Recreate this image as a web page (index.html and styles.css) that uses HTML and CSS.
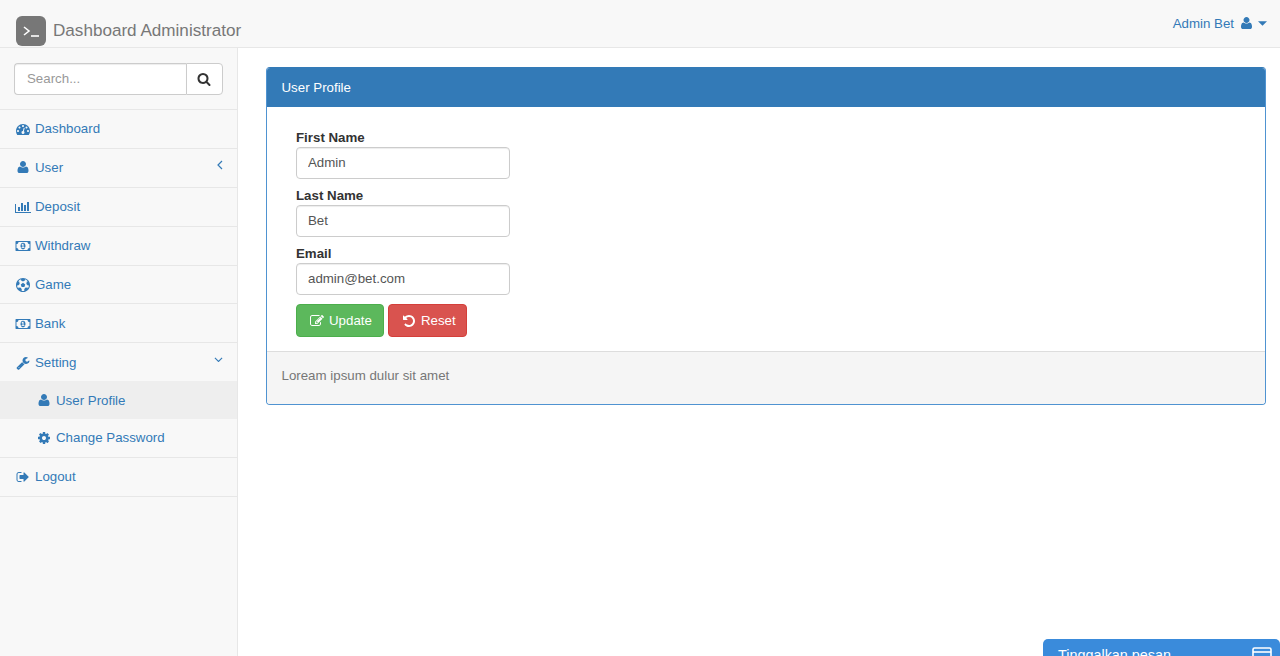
FILE: index.html
```html
<!DOCTYPE html>
<html lang="en">
<head>
<meta charset="utf-8">
<title>Dashboard Administrator</title>
<link rel="stylesheet" href="styles.css">
</head>
<body>
<header class="navbar">
  <a class="brand" href="#">
    <svg class="logo" viewBox="0 0 30 30"><rect width="30" height="30" rx="6" fill="#777"/><path d="M8 11l5 4-5 4" fill="none" stroke="#fff" stroke-width="1.6"/><path d="M15 20h8" stroke="#fff" stroke-width="1.6"/></svg>
    <span>Dashboard Administrator</span>
  </a>
  <a class="account" href="#">
    <span>Admin Bet</span>
    <svg class="account-user" viewBox="0 0 1408 1792"><path d="M1408 1277q0 120-73 189.500t-194 69.500h-874q-121 0-194-69.500t-73-189.500q0-53 3.500-103.500t14-109 26.500-108.500 43-97.500 62-81 85.500-53.500 111.500-20q9 0 42 21.500t74.500 48 108 48 133.500 21.500 133.500-21.500 108-48 74.500-48 42-21.500q61 0 111.500 20t85.500 53.500 62 81 43 97.500 26.500 108.500 14 109 3.500 103.500zm-320-893q0 159-112.500 271.500t-271.500 112.500-271.500-112.500-112.500-271.500 112.500-271.500 271.500-112.500 271.500 112.500 112.500 271.500z"/></svg>
    <svg class="caret" viewBox="0 0 10 5"><path d="M0 0h10L5 5z"/></svg>
  </a>
</header>
<div class="shell">
  <nav class="sidebar">
    <div class="search">
      <input class="search-input" type="text" placeholder="Search...">
      <button class="search-btn" type="button" aria-label="Search">
        <svg viewBox="0 0 1792 1792"><path d="M1216 832q0-185-131.500-316.500t-316.500-131.500-316.500 131.500-131.500 316.500 131.500 316.500 316.500 131.500 316.500-131.500 131.500-316.500zm512 832q0 52-38 90t-90 38q-54 0-90-38l-343-342q-179 124-399 124-143 0-273.500-55.500t-225-150-150-225-55.500-273.500 55.500-273.500 150-225 225-150 273.500-55.500 273.500 55.500 225 150 150 225 55.500 273.500q0 220-124 399l343 343q37 37 37 90z"/></svg>
      </button>
    </div>
    <ul class="menu">
      <li><a href="#"><svg class="ico" viewBox="0 0 1792 1792"><path d="M384 1152q0-53-37.500-90.500t-90.500-37.500-90.500 37.500-37.500 90.500 37.500 90.500 90.500 37.500 90.500-37.500 37.500-90.500zm192-448q0-53-37.500-90.500t-90.500-37.500-90.500 37.500-37.500 90.500 37.500 90.500 90.500 37.500 90.500-37.500 37.500-90.500zm428 481l101-382q6-26-7.500-48.500t-38.500-29.500-48 6.500-30 39.500l-101 382q-60 5-107 43.500t-63 98.500q-20 77 20 146t117 89 146-20 89-117q16-60-6-117t-72-91zm660-33q0-53-37.500-90.500t-90.500-37.500-90.500 37.500-37.500 90.500 37.500 90.500 90.500 37.500 90.500-37.500 37.500-90.500zm-640-640q0-53-37.500-90.500t-90.500-37.500-90.500 37.500-37.500 90.500 37.500 90.500 90.500 37.500 90.500-37.500 37.500-90.500zm448 192q0-53-37.500-90.500t-90.500-37.500-90.500 37.500-37.500 90.500 37.500 90.500 90.500 37.500 90.500-37.500 37.500-90.500zm320 448q0 261-141 483-19 29-54 29h-1402q-35 0-54-29-141-221-141-483 0-182 71-348t191-286 286-191 348-71 348 71 286 191 191 286 71 348z"/></svg>Dashboard</a></li>
      <li><a href="#"><svg class="ico" viewBox="-192 0 1792 1792"><path d="M1408 1277q0 120-73 189.500t-194 69.500h-874q-121 0-194-69.500t-73-189.500q0-53 3.500-103.500t14-109 26.500-108.500 43-97.500 62-81 85.500-53.500 111.500-20q9 0 42 21.500t74.500 48 108 48 133.500 21.500 133.500-21.500 108-48 74.500-48 42-21.500q61 0 111.500 20t85.500 53.500 62 81 43 97.500 26.500 108.500 14 109 3.500 103.500zm-320-893q0 159-112.500 271.500t-271.500 112.500-271.500-112.500-112.500-271.500 112.500-271.500 271.500-112.500 271.500 112.500 112.500 271.500z"/></svg>User<svg class="chev chev-left" viewBox="0 0 6 10"><path d="M5 1L1 5l4 4"/></svg></a></li>
      <li><a href="#"><svg class="ico" viewBox="0 0 2048 1792"><path d="M640 896v512h-256v-512h256zm384-512v1024h-256v-1024h256zm1024 1152v128h-2048v-1152h128v1024h1920zm-640-896v768h-256v-768h256zm384-384v1152h-256v-1152h256z"/></svg>Deposit</a></li>
      <li><a href="#"><svg class="ico" viewBox="0 0 2048 1792"><path d="M832 1152h384v-96h-128v-448h-114l-148 137 77 80q42-37 55-57h2v288h-128v96zm512-256q0 70-21 142t-59.500 134-101.500 101-138 39-138-39-101.500-101-59.500-134-21-142 21-142 59.500-134 101.500-101 138-39 138 39 101.500 101 59.500 134 21 142zm512 256v-512q-106 0-181-75t-75-181h-1152q0 106-75 181t-181 75v512q106 0 181 75t75 181h1152q0-106 75-181t181-75zm128-832v1152q0 26-19 45t-45 19h-1792q-26 0-45-19t-19-45v-1152q0-26 19-45t45-19h1792q26 0 45 19t19 45z"/></svg>Withdraw</a></li>
      <li><a href="#"><svg class="ico" viewBox="0 0 1792 1792"><path d="M609 816l287-208 287 208-109 336h-355zm287-816q182 0 348 71t286 191 191 286 71 348-71 348-191 286-286 191-348 71-348-71-286-191-191-286-71-348 71-348 191-286 286-191 348-71zm619 1350q149-203 149-454v-3l-102 89-240-224 63-323 134 12q-150-206-389-282l53 124-287 159-287-159 53-124q-239 76-389 282l135-12 62 323-240 224-102-89v3q0 251 149 454l30-132 326 40 139 298-116 69q117 39 240 39t240-39l-116-69 139-298 326-40z"/></svg>Game</a></li>
      <li><a href="#"><svg class="ico" viewBox="0 0 2048 1792"><path d="M832 1152h384v-96h-128v-448h-114l-148 137 77 80q42-37 55-57h2v288h-128v96zm512-256q0 70-21 142t-59.500 134-101.500 101-138 39-138-39-101.500-101-59.500-134-21-142 21-142 59.500-134 101.500-101 138-39 138 39 101.500 101 59.500 134 21 142zm512 256v-512q-106 0-181-75t-75-181h-1152q0 106-75 181t-181 75v512q106 0 181 75t75 181h1152q0-106 75-181t181-75zm128-832v1152q0 26-19 45t-45 19h-1792q-26 0-45-19t-19-45v-1152q0-26 19-45t45-19h1792q26 0 45 19t19 45z"/></svg>Bank</a></li>
      <li>
        <a href="#"><svg class="ico" viewBox="0 0 1792 1792"><path d="M448 1472q0-26-19-45t-45-19-45 19-19 45 19 45 45 19 45-19 19-45zm644-420l-682 682q-37 37-90 37-52 0-91-37l-106-108q-38-36-38-90 0-53 38-91l681-681q39 98 114.500 173.500t173.500 114.500zm634-435q0 39-23 106-47 134-164.500 217.500t-258.500 83.500q-185 0-316.500-131.500t-131.500-316.500 131.500-316.500 316.500-131.500q58 0 121.500 16.500t107.500 46.500q16 11 16 28t-16 28l-293 169v224l193 107q5-3 79-48.500t135.500-81 70.500-35.500q15 0 23.500 10t8.500 25z"/></svg>Setting<svg class="chev chev-down" viewBox="0 0 10 6"><path d="M1 1l4 4 4-4"/></svg></a>
        <ul class="submenu">
          <li class="active"><a href="#"><svg class="ico" viewBox="-192 0 1792 1792"><path d="M1408 1277q0 120-73 189.500t-194 69.500h-874q-121 0-194-69.500t-73-189.500q0-53 3.500-103.500t14-109 26.500-108.500 43-97.500 62-81 85.500-53.500 111.500-20q9 0 42 21.500t74.500 48 108 48 133.500 21.500 133.500-21.500 108-48 74.500-48 42-21.500q61 0 111.500 20t85.500 53.500 62 81 43 97.500 26.500 108.500 14 109 3.500 103.500zm-320-893q0 159-112.500 271.500t-271.500 112.500-271.500-112.500-112.500-271.500 112.500-271.500 271.500-112.500 271.500 112.500 112.500 271.500z"/></svg>User Profile</a></li>
          <li><a href="#"><svg class="ico" viewBox="0 0 1792 1792"><path d="M1152 896q0-106-75-181t-181-75-181 75-75 181 75 181 181 75 181-75 75-181zm512-109v222q0 12-8 23t-20 13l-185 28q-19 54-39 91 35 50 107 138 10 12 10 25t-9 23q-27 37-99 108t-94 71q-12 0-26-9l-138-108q-44 23-91 38-16 136-29 186-7 28-36 28h-222q-14 0-24.500-8.500t-11.500-21.500l-28-184q-49-16-90-37l-141 107q-10 9-25 9-14 0-25-11-126-114-165-168-7-10-7-23 0-12 8-23 15-21 51-66.500t54-70.500q-27-50-41-99l-183-27q-13-2-21-12.500t-8-23.500v-222q0-12 8-23t19-13l186-28q14-46 39-92-40-57-107-138-10-12-10-24 0-10 9-23 26-36 98.500-107.500t94.500-71.500q13 0 26 10l138 107q44-23 91-38 16-136 29-186 7-28 36-28h222q14 0 24.500 8.500t11.500 21.500l28 184q49 16 90 37l142-107q9-9 24-9 13 0 25 10 129 119 165 170 7 8 7 22 0 12-8 23-15 21-51 66.500t-54 70.500q26 50 41 98l183 28q13 2 21 12.500t8 23.500z"/></svg>Change Password</a></li>
        </ul>
      </li>
      <li><a href="#"><svg class="ico" viewBox="0 0 1792 1792"><path d="M704 1440q0 4 1 20t.5 26.500-3 23.500-10 19.500-20.500 6.500h-320q-119 0-203.500-84.500t-84.500-203.500v-704q0-119 84.500-203.500t203.500-84.500h320q13 0 22.500 9.500t9.500 22.500q0 4 1 20t.5 26.500-3 23.500-10 19.500-20.500 6.500h-320q-66 0-113 47t-47 113v704q0 66 47 113t113 47h312l11.500 1 11.500 3 8 5.500 7 9 2 13.500zm928-544q0 26-19 45l-544 544q-19 19-45 19t-45-19-19-45v-288h-448q-26 0-45-19t-19-45v-384q0-26 19-45t45-19h448v-288q0-26 19-45t45-19 45 19l544 544q19 19 19 45z"/></svg>Logout</a></li>
    </ul>
  </nav>
  <main class="content">
    <section class="panel">
      <div class="panel-heading">User Profile</div>
      <form class="panel-body">
        <label class="field"><span class="field-label">First Name</span><input class="field-input" type="text" value="Admin"></label>
        <label class="field"><span class="field-label">Last Name</span><input class="field-input" type="text" value="Bet"></label>
        <label class="field"><span class="field-label">Email</span><input class="field-input" type="text" value="admin@bet.com"></label>
        <div class="actions">
          <button class="btn btn-update" type="button"><svg viewBox="0 0 1792 1792"><path d="M888 1184l116-116-152-152-116 116v56h96v96h56zm440-720q-16-16-33 1l-350 350q-17 17-1 33t33-1l350-350q17-17 1-33zm80 594v190q0 119-84.500 203.500t-203.500 84.500h-832q-119 0-203.500-84.500t-84.500-203.500v-832q0-119 84.500-203.500t203.500-84.500h832q63 0 117 25 15 7 18 23 3 17-9 29l-49 49q-14 14-32 8-23-6-45-6h-832q-66 0-113 47t-47 113v832q0 66 47 113t113 47h832q66 0 113-47t47-113v-126q0-13 9-22l64-64q15-15 35-7t20 29zm-96-738l288 288-672 672h-288v-288zm444 132l-92 92-288-288 92-92q28-28 68-28t68 28l152 152q28 28 28 68t-28 68z"/></svg>Update</button>
          <button class="btn btn-reset" type="button"><svg viewBox="0 0 1792 1792"><path d="M1664 896q0 156-61 298t-164 245-245 164-298 61q-172 0-327-72.500t-264-204.500q-7-10-6.500-22.500t8.500-20.500l137-138q10-9 25-9 16 2 23 12 73 95 179 147t225 52q104 0 198.500-40.500t163.500-109.500 109.500-163.500 40.500-198.500-40.500-198.500-109.500-163.500-163.500-109.500-198.500-40.500q-98 0-188 35.500t-160 101.500l137 138q31 30 14 69-17 40-59 40h-448q-26 0-45-19t-19-45v-448q0-42 40-59 39-17 69 14l130 129q107-101 244.500-156.500t284.500-55.500q156 0 298 61t245 164 164 245 61 298z"/></svg>Reset</button>
        </div>
      </form>
      <div class="panel-footer">Loream ipsum dulur sit amet</div>
    </section>
  </main>
</div>
<aside class="chat">
  <span>Tinggalkan pesan</span>
  <svg class="chat-ico" viewBox="0 0 20 16"><rect x="1" y="1" width="18" height="14" rx="1.5" fill="none" stroke="#fff" stroke-width="1.6"/><path d="M1 5h18" stroke="#fff" stroke-width="1.6"/></svg>
</aside>
</body>
</html>
```
FILE: styles.css
```css
* { box-sizing: border-box; }
html, body { height: 100%; }
body {
  margin: 0;
  display: flex;
  flex-direction: column;
  overflow: hidden;
  font-family: "Liberation Sans", Arial, sans-serif;
  font-size: 13.3px;
  line-height: 20px;
  color: #333;
  background: #fff;
}
a { color: #337ab7; text-decoration: none; }
ul { list-style: none; margin: 0; padding: 0; }

.navbar {
  flex: none;
  height: 48px;
  display: flex;
  justify-content: space-between;
  align-items: flex-start;
  padding: 0 13px 0 16px;
  background: #f8f8f8;
  border-bottom: 1px solid #e7e7e7;
}
.brand {
  display: flex;
  align-items: center;
  gap: 7px;
  margin-top: 15px;
  color: #777;
  font-size: 17.1px;
}
.logo { width: 30px; height: 30px; display: block; margin-top: 1px; }
.account {
  display: flex;
  align-items: center;
  margin-top: 13.5px;
}
.account-user { width: 11px; height: 14px; margin-left: 7px; fill: #337ab7; }
.caret { width: 9px; height: 5px; margin-left: 6px; fill: #337ab7; }

.shell { flex: 1; display: flex; min-height: 0; }
.sidebar {
  flex: none;
  width: 238px;
  background: #f8f8f8;
  border-right: 1px solid #e7e7e7;
}
.search {
  display: flex;
  height: 62px;
  padding: 15px 14px 14px;
  border-bottom: 1px solid #e7e7e7;
}
.search-input {
  flex: none;
  width: 172px;
  height: 32px;
  padding: 0 12px 1px;
  font: inherit;
  color: #555;
  background: #fff;
  border: 1px solid #ccc;
  border-right: 0;
  border-radius: 4px 0 0 4px;
  box-shadow: inset 0 1px 1px rgba(0,0,0,.075);
}
.search-input::placeholder { color: #999; opacity: 1; }
.search-btn {
  flex: none;
  width: 37px;
  height: 32px;
  display: flex;
  align-items: center;
  justify-content: center;
  padding: 0 1px 0 0;
  background: #fff;
  border: 1px solid #ccc;
  border-radius: 0 4px 4px 0;
}
.search-btn svg { width: 14px; height: 14px; fill: #333; }

.menu > li { border-bottom: 1px solid #e7e7e7; }
.menu a {
  display: flex;
  align-items: center;
  height: 37.9px;
  padding: 0.8px 15px 0;
}
.ico { flex: none; width: 16px; height: 14px; margin-right: 4px; fill: #337ab7; }
.chev {
  margin-left: auto;
  margin-right: -1px;
  fill: none;
  stroke: #337ab7;
  stroke-width: 1.2;
}
.chev-left { width: 6px; height: 10px; margin-top: -6px; }
.chev-down { width: 9px; height: 5.4px; margin-top: -6px; }
.submenu a { padding-left: 36px; }
.submenu .active { background: #eee; }

.content { flex: 1; min-width: 0; padding: 19px 14px 0 28px; }
.panel {
  border: 1px solid #4f93d1;
  border-top-color: #337ab7;
  border-radius: 4px;
  overflow: hidden;
}
.panel-heading {
  height: 39px;
  padding: 10px 14.5px 0;
  color: #fff;
  background: #337ab7;
}
.panel-body {
  display: flex;
  flex-direction: column;
  padding: 20px 29px 14px;
}
.field { display: block; margin-bottom: 6px; }
.field-label { display: block; height: 20px; line-height: 22px; font-weight: 700; }
.field-input {
  display: block;
  width: 214px;
  height: 32px;
  padding: 0 11px 1px;
  font: inherit;
  color: #555;
  background: #fff;
  border: 1px solid #ccc;
  border-radius: 4px;
  box-shadow: inset 0 1px 1px rgba(0,0,0,.075);
}
.actions { display: flex; gap: 4px; margin-top: 3px; }
.btn {
  display: flex;
  align-items: center;
  height: 33px;
  padding: 0 11px 0 13px;
  font: inherit;
  color: #fff;
  border: 1px solid transparent;
  border-radius: 4px;
}
.btn svg { width: 14px; height: 14px; margin-right: 5px; fill: #fff; }
.btn-update { background: #5cb85c; border-color: #4cae4c; }
.btn-reset { background: #d9534f; border-color: #d43f3a; padding-right: 10.5px; }
.panel-footer {
  height: 53px;
  padding: 14px 14.5px 0;
  color: #777;
  background: #f5f5f5;
  border-top: 1px solid #ddd;
}

.chat {
  position: fixed;
  left: 1043px;
  right: 0;
  top: 639px;
  height: 60px;
  display: flex;
  justify-content: space-between;
  align-items: flex-start;
  padding: 6px 8px 0 15px;
  font-size: 14.4px;
  color: #fff;
  background: #3a8bdb;
  border-radius: 5px 5px 0 0;
}
.chat-ico { width: 20px; height: 16px; margin-top: 2px; }
```
